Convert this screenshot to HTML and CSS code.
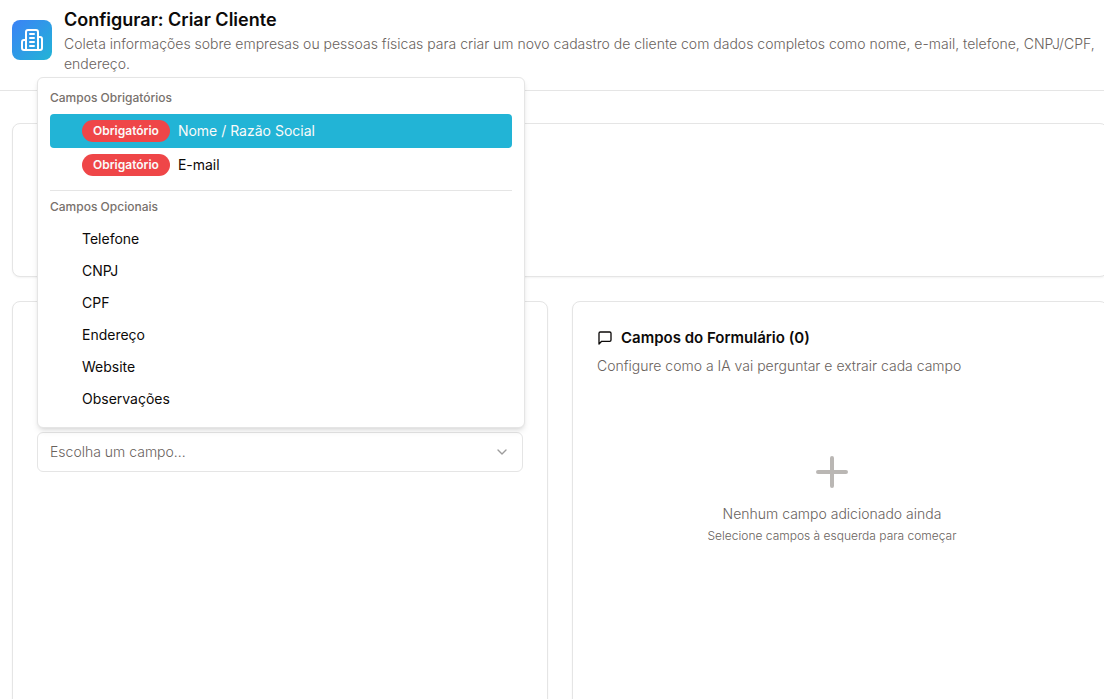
FILE: index.html
```html
<!DOCTYPE html>
<html lang="pt-BR">
<head>
  <meta charset="utf-8">
  <meta name="viewport" content="width=device-width, initial-scale=1">
  <title>Configurar: Criar Cliente</title>
  <link rel="stylesheet" href="styles.css">
</head>
<body>
  <header class="header">
    <div class="header-icon">
      <svg class="icon-24" viewBox="0 0 24 24" aria-hidden="true">
        <path d="M6 22V4a2 2 0 0 1 2-2h8a2 2 0 0 1 2 2v18Z"/>
        <path d="M6 12H4a2 2 0 0 0-2 2v6a2 2 0 0 0 2 2h2"/>
        <path d="M18 9h2a2 2 0 0 1 2 2v9a2 2 0 0 1-2 2h-2"/>
        <path d="M10 6h4M10 10h4M10 14h4M10 18h4"/>
      </svg>
    </div>
    <div class="header-text">
      <h1 class="title">Configurar: Criar Cliente</h1>
      <p class="muted">Coleta informações sobre empresas ou pessoas físicas para criar um novo cadastro de cliente com dados completos como nome, e-mail, telefone, CNPJ/CPF, endereço.</p>
    </div>
  </header>

  <main class="content">
    <section class="card card-summary"></section>

    <div class="columns">
      <section class="card card-picker">
        <div class="field">
          <select class="select" aria-label="Escolha um campo">
            <option>Escolha um campo...</option>
          </select>
          <svg class="chevron" viewBox="0 0 24 24" aria-hidden="true"><path d="m6 9 6 6 6-6"/></svg>

          <div class="menu">
            <h2 class="menu-label">Campos Obrigatórios</h2>
            <button type="button" class="menu-item active"><span class="badge">Obrigatório</span>Nome / Razão Social</button>
            <button type="button" class="menu-item"><span class="badge">Obrigatório</span>E-mail</button>
            <hr class="separator">
            <h2 class="menu-label">Campos Opcionais</h2>
            <button type="button" class="menu-item">Telefone</button>
            <button type="button" class="menu-item">CNPJ</button>
            <button type="button" class="menu-item">CPF</button>
            <button type="button" class="menu-item">Endereço</button>
            <button type="button" class="menu-item">Website</button>
            <button type="button" class="menu-item">Observações</button>
          </div>
        </div>
      </section>

      <section class="card card-form">
        <h2 class="card-title">
          <svg class="icon-16" viewBox="0 0 24 24" aria-hidden="true"><path d="M21 15a2 2 0 0 1-2 2H7l-4 4V5a2 2 0 0 1 2-2h14a2 2 0 0 1 2 2z"/></svg>
          Campos do Formulário (0)
        </h2>
        <p class="muted">Configure como a IA vai perguntar e extrair cada campo</p>
        <div class="empty">
          <svg class="icon-48" viewBox="0 0 24 24" aria-hidden="true"><path d="M5 12h14M12 5v14"/></svg>
          <p class="muted">Nenhum campo adicionado ainda</p>
          <p class="muted small">Selecione campos à esquerda para começar</p>
        </div>
      </section>
    </div>
  </main>
</body>
</html>
```
FILE: styles.css
```css
* { box-sizing: border-box; }

body {
  margin: 0;
  height: 100vh;
  overflow: hidden;
  display: flex;
  flex-direction: column;
  background: #fff;
  color: #0c0a09;
  font: 14px/20px Inter, "Liberation Sans", sans-serif;
}

h1, h2, p { margin: 0; }

svg {
  flex: none;
  fill: none;
  stroke: currentColor;
  stroke-width: 2;
  stroke-linecap: round;
  stroke-linejoin: round;
}

.icon-16 { width: 16px; height: 16px; }
.icon-24 { width: 24px; height: 24px; }
.icon-48 { width: 48px; height: 48px; }

.header {
  display: flex;
  align-items: center;
  gap: 12px;
  padding: 6px 4px 16px 12px;
  border-bottom: 1px solid #e5e5e5;
}

.header-icon {
  flex: none;
  display: grid;
  place-items: center;
  width: 40px;
  height: 40px;
  border-radius: 8px;
  background: linear-gradient(to bottom right, #3b82f6, #22b4d6);
  color: #fff;
}

.title {
  font-size: 18px;
  line-height: 28px;
  font-weight: 600;
}

.muted {
  color: #69625d;
  font-weight: 300;
}

.content {
  flex: 1;
  display: flex;
  flex-direction: column;
  gap: 24px;
  margin-right: -4px;
  padding: 32px 0 0 12px;
}

.card {
  border: 1px solid #e5e5e5;
  border-radius: 8px;
  background: #fff;
  box-shadow: 0 1px 2px rgba(0, 0, 0, 0.05);
  padding: 24px;
}

.card-summary { min-height: 154px; }

.columns {
  flex: 1;
  display: grid;
  grid-template-columns: 1fr 1fr;
  gap: 24px;
  margin-bottom: -24px;
}

.card-picker { padding-top: 130px; }

.field { position: relative; }

.select {
  display: block;
  width: 100%;
  height: 40px;
  padding: 0 12px;
  border: 1px solid #e5e5e5;
  border-radius: 6px;
  background: #fff;
  color: #69625d;
  font: inherit;
  font-weight: 300;
  appearance: none;
}

.chevron {
  position: absolute;
  top: 12px;
  right: 13px;
  width: 16px;
  height: 16px;
  opacity: 0.4;
  pointer-events: none;
}

.menu {
  position: absolute;
  bottom: calc(100% + 4px);
  left: 0;
  right: -2px;
  padding: 12px;
  border: 1px solid #e5e5e5;
  border-radius: 6px;
  background: #fff;
  box-shadow: 0 4px 6px -1px rgba(0, 0, 0, 0.1), 0 2px 4px -2px rgba(0, 0, 0, 0.1);
}

.menu-label {
  margin-bottom: 8px;
  color: #78716c;
  font-size: 12px;
  line-height: 16px;
  font-weight: 500;
}

.menu-item {
  display: flex;
  align-items: center;
  gap: 8px;
  width: 100%;
  min-height: 32px;
  padding: 6px 8px 6px 32px;
  border: 0;
  border-radius: 4px;
  background: none;
  color: inherit;
  font: inherit;
  text-align: left;
}

.menu-item.active {
  background: #22b4d6;
  color: #fafaf9;
}

.badge {
  padding: 3px 11px;
  border-radius: 11px;
  background: #ef4648;
  color: #fafaf9;
  font-size: 12px;
  line-height: 16px;
  font-weight: 600;
}

.separator {
  height: 1px;
  margin: 8px 0;
  border: 0;
  background: #e5e5e5;
}

.card-title {
  display: flex;
  align-items: center;
  gap: 8px;
  margin-bottom: 6px;
  font-size: 15px;
  line-height: 24px;
  font-weight: 600;
}

.empty {
  display: flex;
  flex-direction: column;
  align-items: center;
  padding: 72px 16px 48px 0;
  text-align: center;
}

.empty .icon-48 {
  margin-bottom: 8px;
  color: #78716c;
  opacity: 0.5;
}

.small {
  margin-top: 4px;
  font-size: 12px;
  line-height: 16px;
}
```
